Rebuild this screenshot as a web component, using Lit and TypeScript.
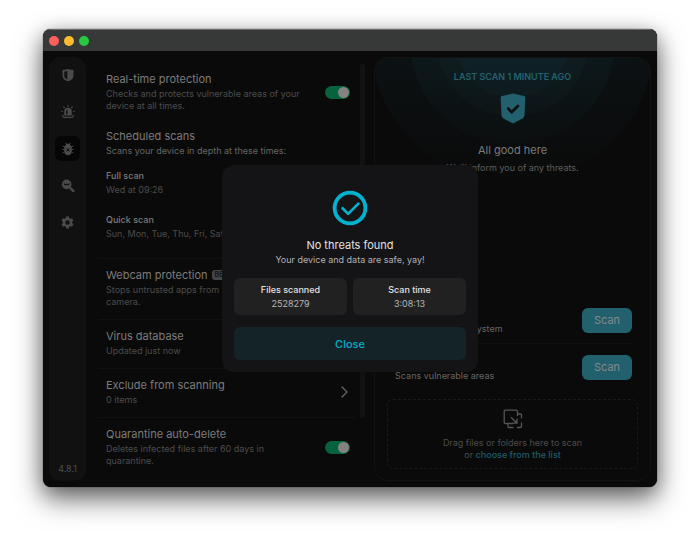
import { LitElement, html, css, nothing, type TemplateResult } from "lit";
import { customElement, property } from "lit/decorators.js";
import { classMap } from "lit/directives/class-map.js";

const icons: Record<string, TemplateResult> = {
  shield: html`<svg viewBox="0 0 16 16" width="14" height="14" aria-hidden="true">
    <path fill="currentColor" fill-rule="evenodd" d="M1.600 2.600 8 1.200l6.400 1.400-.2 7c-.2 2.800-2.600 4.400-6.200 5.600-3.600-1.200-6-2.800-6.200-5.600zM3.800 4.200v5.300c.1 1.600 1.400 2.700 3.400 3.500V3.500z"/>
  </svg>`,
  alarm: html`<svg viewBox="0 0 16 16" width="14" height="14" aria-hidden="true">
    <path fill="currentColor" fill-rule="evenodd" d="M3.700 12V7.500a4.300 4.300 0 0 1 8.600 0V12zM5.800 7.200v3.400h1.700V5.700C6.400 5.800 5.800 6.300 5.800 7.200z"/>
    <path fill="none" stroke="currentColor" stroke-width="1.300" stroke-linecap="round" d="M2.200 11.500v1.200c0 .9.600 1.500 1.400 1.500h8.800c.8 0 1.400-.6 1.400-1.500v-1.200M8 .7v1M3.200 2.300l.7.800M12.800 2.300l-.7.800M.8 7.400h.9M14.300 7.400h.9"/>
  </svg>`,
  bug: html`<svg viewBox="0 0 16 16" width="14" height="14" aria-hidden="true">
    <path fill="none" stroke="currentColor" stroke-width="1.100" stroke-linecap="round" d="M5.400 1.200 6.400 3M10.600 1.200 9.600 3M2.200 4.600l2 1.200M13.800 4.600l-2 1.200M1.800 8.600h2.400M14.200 8.600h-2.400M2.200 12.200l2-1M13.800 12.200l-2-1"/>
    <path fill="currentColor" d="M5 4C5.400 2.500 6.500 2 8 2s2.600.5 3 2l1.200.9v5.700C12.200 13.400 10.500 15.200 8 15.200s-4.200-1.800-4.200-4.600V4.900z"/>
    <path stroke="#060606" stroke-width="1.100" stroke-linecap="round" d="m6.700 7.600 2.600 2.800m0-2.800-2.600 2.800"/>
  </svg>`,
  search: html`<svg viewBox="0 0 16 16" width="14" height="14" aria-hidden="true">
    <circle cx="6.500" cy="6.200" r="5.500" fill="currentColor"/>
    <path fill="none" stroke="#111112" stroke-width="1.300" stroke-linecap="round" stroke-linejoin="round" d="M3.600 5.500c.9 1.500 2 1.500 2.900.2.900 1.300 2 1.300 2.900-.2"/>
    <path stroke="currentColor" stroke-width="3" stroke-linecap="round" d="m11.400 11 2.600 2.600"/>
    <path stroke="currentColor" stroke-width="1.600" d="m9.500 9.200 2 2"/>
  </svg>`,
  gear: html`<svg viewBox="0 0 24 24" width="15" height="15" aria-hidden="true">
    <path fill="currentColor" d="M19.140 12.940c.04-.3.060-.61.060-.94 0-.32-.02-.64-.07-.94l2.030-1.580a.49.49 0 0 0 .12-.61l-1.920-3.320a.488.488 0 0 0-.59-.22l-2.390.96c-.5-.38-1.030-.7-1.620-.94l-.36-2.540a.484.484 0 0 0-.48-.41h-3.840c-.24 0-.43.17-.47.41l-.36 2.540c-.59.24-1.130.57-1.620.94l-2.390-.96c-.22-.08-.47 0-.59.22L2.740 8.870c-.12.21-.08.47.12.61l2.030 1.580c-.05.3-.09.63-.09.94s.02.64.07.94l-2.030 1.580a.49.49 0 0 0-.12.610l1.920 3.320c.12.220.37.290.59.220l2.390-.96c.5.380 1.030.7 1.620.94l.36 2.540c.05.240.24.410.48.410h3.840c.24 0 .44-.17.47-.41l.36-2.540c.59-.24 1.130-.56 1.620-.94l2.390.96c.22.080.47 0 .59-.22l1.920-3.320c.12-.22.070-.47-.12-.61zM12 15.600A3.600 3.600 0 1 1 12 8.400a3.600 3.600 0 0 1 0 7.200z"/>
  </svg>`,
};

@customElement("side-nav")
class SideNav extends LitElement {
  static styles = css`
    :host { display: flex; flex-direction: column; align-items: center; padding: 5px 6px 6px; background: #111112; border-radius: 12px; }
    nav { display: flex; flex-direction: column; gap: 12px; flex: 1; }
    button { display: grid; place-items: center; width: 25px; height: 25px; padding: 0; border: 0; border-radius: 6px; background: none; color: #4a4a4b; }
    .active { background: #060606; }
    .version { font-size: 9px; line-height: 12px; color: #505050; }
  `;
  render() {
    const items = [["shield", "Overview"], ["alarm", "Alerts"], ["bug", "Antivirus"], ["search", "Identity"], ["gear", "Settings"]];
    return html`<nav>${items.map(([k, label]) => html`
      <button class=${classMap({ active: k === "bug" })} aria-label=${label}>${icons[k]}</button>`)}</nav>
      <span class="version">4.8.1</span>`;
  }
}

@customElement("setting-row")
class SettingRow extends LitElement {
  @property() heading = "";
  @property() note = "";
  @property() control = "";
  @property() badge = "";
  static styles = css`
    :host { display: block; padding: 9px 6px 11px 8px; }
    .row { display: flex; align-items: center; justify-content: space-between; }
    .text { max-width: 204px; }
    .title { display: flex; align-items: center; gap: 4px; font-size: 11px; line-height: 14px; color: #7c7c7c; white-space: nowrap; }
    .note { margin: 2px 0 0; font-size: 9px; line-height: 12px; color: var(--note, #4c4c4c); }
    .badge { padding: 0 3px; border-radius: 3px; background: #444; color: #161616; font-size: 7px; line-height: 10px; font-weight: 700; }
    .switch { appearance: none; display: flex; align-items: center; justify-content: flex-end; flex: none; box-sizing: border-box; width: 25px; height: 13px; margin: 0; padding: 1px; border-radius: 7px; background: #05643d; }
    .switch::before { content: ""; width: 11px; height: 11px; border-radius: 50%; background: #858282; }
    .open { display: flex; flex: none; padding: 0; border: 0; background: none; color: #666; }
  `;
  render() {
    const control = this.control === "switch"
      ? html`<input id="c" class="switch" type="checkbox" checked />`
      : this.control === "open"
        ? html`<button id="c" class="open" aria-label=${this.heading}><svg width="11" height="14" viewBox="0 0 11 14"><path d="m3 2 5 5-5 5" fill="none" stroke="currentColor" stroke-width="1.400" stroke-linecap="round" stroke-linejoin="round"/></svg></button>`
        : nothing;
    return html`<div class="row"><div class="text">
      <label class="title" for="c">${this.heading}${this.badge ? html`<span class="badge">${this.badge}</span>` : nothing}</label>
      <p class="note">${this.note}</p></div>${control}</div><slot></slot>`;
  }
}

@customElement("scan-panel")
class ScanPanel extends LitElement {
  static styles = css`
    :host {
      display: flex; flex-direction: column; align-items: center; box-sizing: border-box; padding: 13px 12px 11px;
      border: 1px solid #131313; border-radius: 14px;
      background:
        linear-gradient(to bottom, transparent, #0a0a0a 126px),
        radial-gradient(circle at 50% -17px, #0f2127 56px, #0f1d20 57px, #0f1d20 75px, #0d181b 76px, #0d181b 102px, #0c1113 103px, #0c1113 141px, #0a0a0a 142px);
    }
    .last { font-size: 9px; line-height: 12px; font-weight: 600; text-transform: uppercase; color: #23626f; }
    .shield { margin-top: 10px; }
    .good { margin: 19px 0 0; font-size: 11px; line-height: 14px; font-weight: 400; color: #7c7c7c; }
    .inform { margin: 5px 0 0; font-size: 9px; line-height: 12px; color: #5e5e5e; }
    .scans { display: flex; flex-direction: column; align-self: stretch; margin: auto 6px 0 8px; }
    .scan { display: flex; align-items: center; justify-content: space-between; height: 46px; }
    .scan + .scan { border-top: 1px solid #111; }
    .scan p { margin: 17px 0 0; font-size: 9px; line-height: 12px; color: #666; }
    .go { width: 50px; height: 25px; padding: 0; border: 0; border-radius: 6px; background: #23606d; color: #858888; font: 11px "Inter", sans-serif; }
    .drop { display: flex; flex-direction: column; align-items: center; align-self: stretch; box-sizing: border-box; margin-top: 9px; padding: 9px 0 7px; border: 1px dashed #1a1a1a; border-radius: 6px; font-size: 9px; line-height: 12px; color: #4c4c4c; }
    .drop svg { margin-bottom: 8px; }
    a { color: #1f5d69; text-decoration: none; font-weight: 500; }
  `;
  render() {
    return html`
      <span class="last">Last scan 1 minute ago</span>
      <svg class="shield" width="26" height="31" viewBox="0 0 26 31" aria-hidden="true">
        <path fill="#23606d" d="M13 .6 24 3c.8.200 1.300.700 1.300 1.500L24.500 22c-.1 1.500-.8 2.600-2 3.400L13 30.500l-9.500-5.100c-1.200-.8-1.900-1.900-2-3.400L.7 4.500C.7 3.700 1.200 3.200 2 3z"/>
        <path fill="none" stroke="#0b1012" stroke-width="2.800" stroke-linecap="round" stroke-linejoin="round" d="m8.300 15.600 3.400 3.600 6.200-6.200"/>
      </svg>
      <h2 class="good">All good here</h2>
      <p class="inform">We'll inform you of any threats.</p>
      <div class="scans">${["Scans your entire system", "Scans vulnerable areas"].map((text) => html`
        <div class="scan"><p>${text}</p><button class="go">Scan</button></div>`)}</div>
      <div class="drop">
        <svg width="20" height="20" viewBox="0 0 20 20" fill="none" stroke="#555" stroke-width="1.300" aria-hidden="true">
          <path d="M14.500 7V2.200c0-.7-.3-1-1-1H2.200c-.7 0-1 .3-1 1v11.300c0 .7.300 1 1 1H10"/>
          <path d="m8 8.200 5.800 5.800M14 9.500v4.700H9.500M14.500 5h3c.7 0 1 .3 1 1v3.500M18.500 13.500v4c0 .7-.3 1-1 1H14M10.500 18.500H6c-.7 0-1-.3-1-1v-3"/>
        </svg>
        <span>Drag files or folders here to scan</span>
        <span>or <a href="#">choose from the list</a></span>
      </div>`;
  }
}

@customElement("result-dialog")
class ResultDialog extends LitElement {
  static styles = css`
    :host { position: absolute; inset: 0 0 1px; display: grid; place-items: center; }
    dialog { position: static; display: flex; flex-direction: column; align-items: center; box-sizing: border-box; width: 256px; max-width: 100%; margin: 0; padding: 25px 12px 12px; border: 0; border-radius: 12px; background: #141416; color: #e2e2e3; font-family: "Inter", sans-serif; }
    h2 { margin: 12px 0 0; font-size: 11px; line-height: 14px; font-weight: 400; }
    p { margin: 2px 0 0; font-size: 9px; line-height: 12px; color: #b2b2b3; }
    dl { display: flex; align-self: stretch; gap: 6px; margin: 12px 0; }
    .stat { flex: 1; display: flex; flex-direction: column; gap: 2px; padding: 6px 0 5px; border-radius: 6px; background: #212122; text-align: center; }
    dt { font-size: 9px; line-height: 12px; font-weight: 500; }
    dd { margin: 0; font-size: 9px; line-height: 12px; color: #b8b8b9; }
    button { align-self: stretch; height: 33px; border: 0; border-radius: 6px; background: #142328; color: #08abc6; font: 500 11px "Inter", sans-serif; }
  `;
  render() {
    return html`<dialog open aria-labelledby="t">
      <svg width="36" height="36" viewBox="0 0 36 36" fill="none" stroke="#04b2cf" aria-hidden="true">
        <circle cx="18" cy="18" r="15.400" stroke-width="3.800"/>
        <path d="m10.600 18.300 5.500 5.600 10.300-10.300" stroke-width="2.700" stroke-linecap="round" stroke-linejoin="round"/>
      </svg>
      <h2 id="t">No threats found</h2>
      <p>Your device and data are safe, yay!</p>
      <dl>
        <div class="stat"><dt>Files scanned</dt><dd>2528279</dd></div>
        <div class="stat"><dt>Scan time</dt><dd>3:08:13</dd></div>
      </dl>
      <button>Close</button>
    </dialog>`;
  }
}

@customElement("app-root")
class AppRoot extends LitElement {
  static styles = css`
    :host { display: flex; box-sizing: border-box; min-height: 100vh; padding: 29px 43px 56px; background: #fff; font-family: "Inter", sans-serif; }
    .window { flex: 1; display: flex; flex-direction: column; border-radius: 8px; background: #0a0a0a; overflow: hidden; box-shadow: 0 0 1px #000, 0 12px 28px rgba(0, 0, 0, 0.55), 0 4px 18px rgba(0, 0, 0, 0.25); }
    .bar { display: flex; align-items: center; gap: 5px; box-sizing: border-box; height: 22px; padding: 0 6px; background: #373938; border-top: 1px solid #6a6c6b; }
    .light { width: 10px; height: 10px; padding: 0; border: 0; border-radius: 50%; }
    .close { background: #ff5f57; }
    .min { background: #febc2e; }
    .max { background: #28c840; }
    .body { position: relative; flex: 1; display: flex; padding: 6px; }
    side-nav { flex: none; }
    .settings { flex: 1; margin: 6px 4px 0 12px; }
    .settings > * { border-bottom: 1px solid #111; }
    .settings > .joined { padding-bottom: 8px; border-bottom: 0; }
    .settings > .schedule { padding-bottom: 18px; --note: #666; }
    .settings > .last { border-bottom: 0; }
    .plan { margin-top: 13px; font-size: 9px; line-height: 12px; color: #4c4c4c; }
    .plan + .plan { margin-top: 18px; }
    .plan h3 { margin: 0 0 2px; font-size: 9px; line-height: 12px; font-weight: 500; color: #7c7c7c; }
    .thumb { flex: none; width: 5px; margin: 7px 9px 63px 0; border-radius: 2px; background: #121212; }
    scan-panel { flex: none; width: 46%; }
  `;
  render() {
    return html`<main class="window">
      <div class="bar">
        <button class="light close" aria-label="Close window"></button>
        <button class="light min" aria-label="Minimize"></button>
        <button class="light max" aria-label="Zoom"></button>
      </div>
      <div class="body">
        <side-nav></side-nav>
        <section class="settings">
          <setting-row class="joined" heading="Real-time protection" note="Checks and protects vulnerable areas of your device at all times." control="switch"></setting-row>
          <setting-row class="schedule" heading="Scheduled scans" note="Scans your device in depth at these times:">
            <div class="plan"><h3>Full scan</h3>Wed at 09:26</div>
            <div class="plan"><h3>Quick scan</h3>Sun, Mon, Tue, Thu, Fri, Sat</div>
          </setting-row>
          <setting-row heading="Webcam protection" badge="BETA" note="Stops untrusted apps from accessing your camera."></setting-row>
          <setting-row heading="Virus database" note="Updated just now"></setting-row>
          <setting-row heading="Exclude from scanning" note="0 items" control="open"></setting-row>
          <setting-row class="last" heading="Quarantine auto-delete" note="Deletes infected files after 60 days in quarantine." control="switch"></setting-row>
        </section>
        <div class="thumb"></div>
        <scan-panel></scan-panel>
        <result-dialog></result-dialog>
      </div>
    </main>`;
  }
}
